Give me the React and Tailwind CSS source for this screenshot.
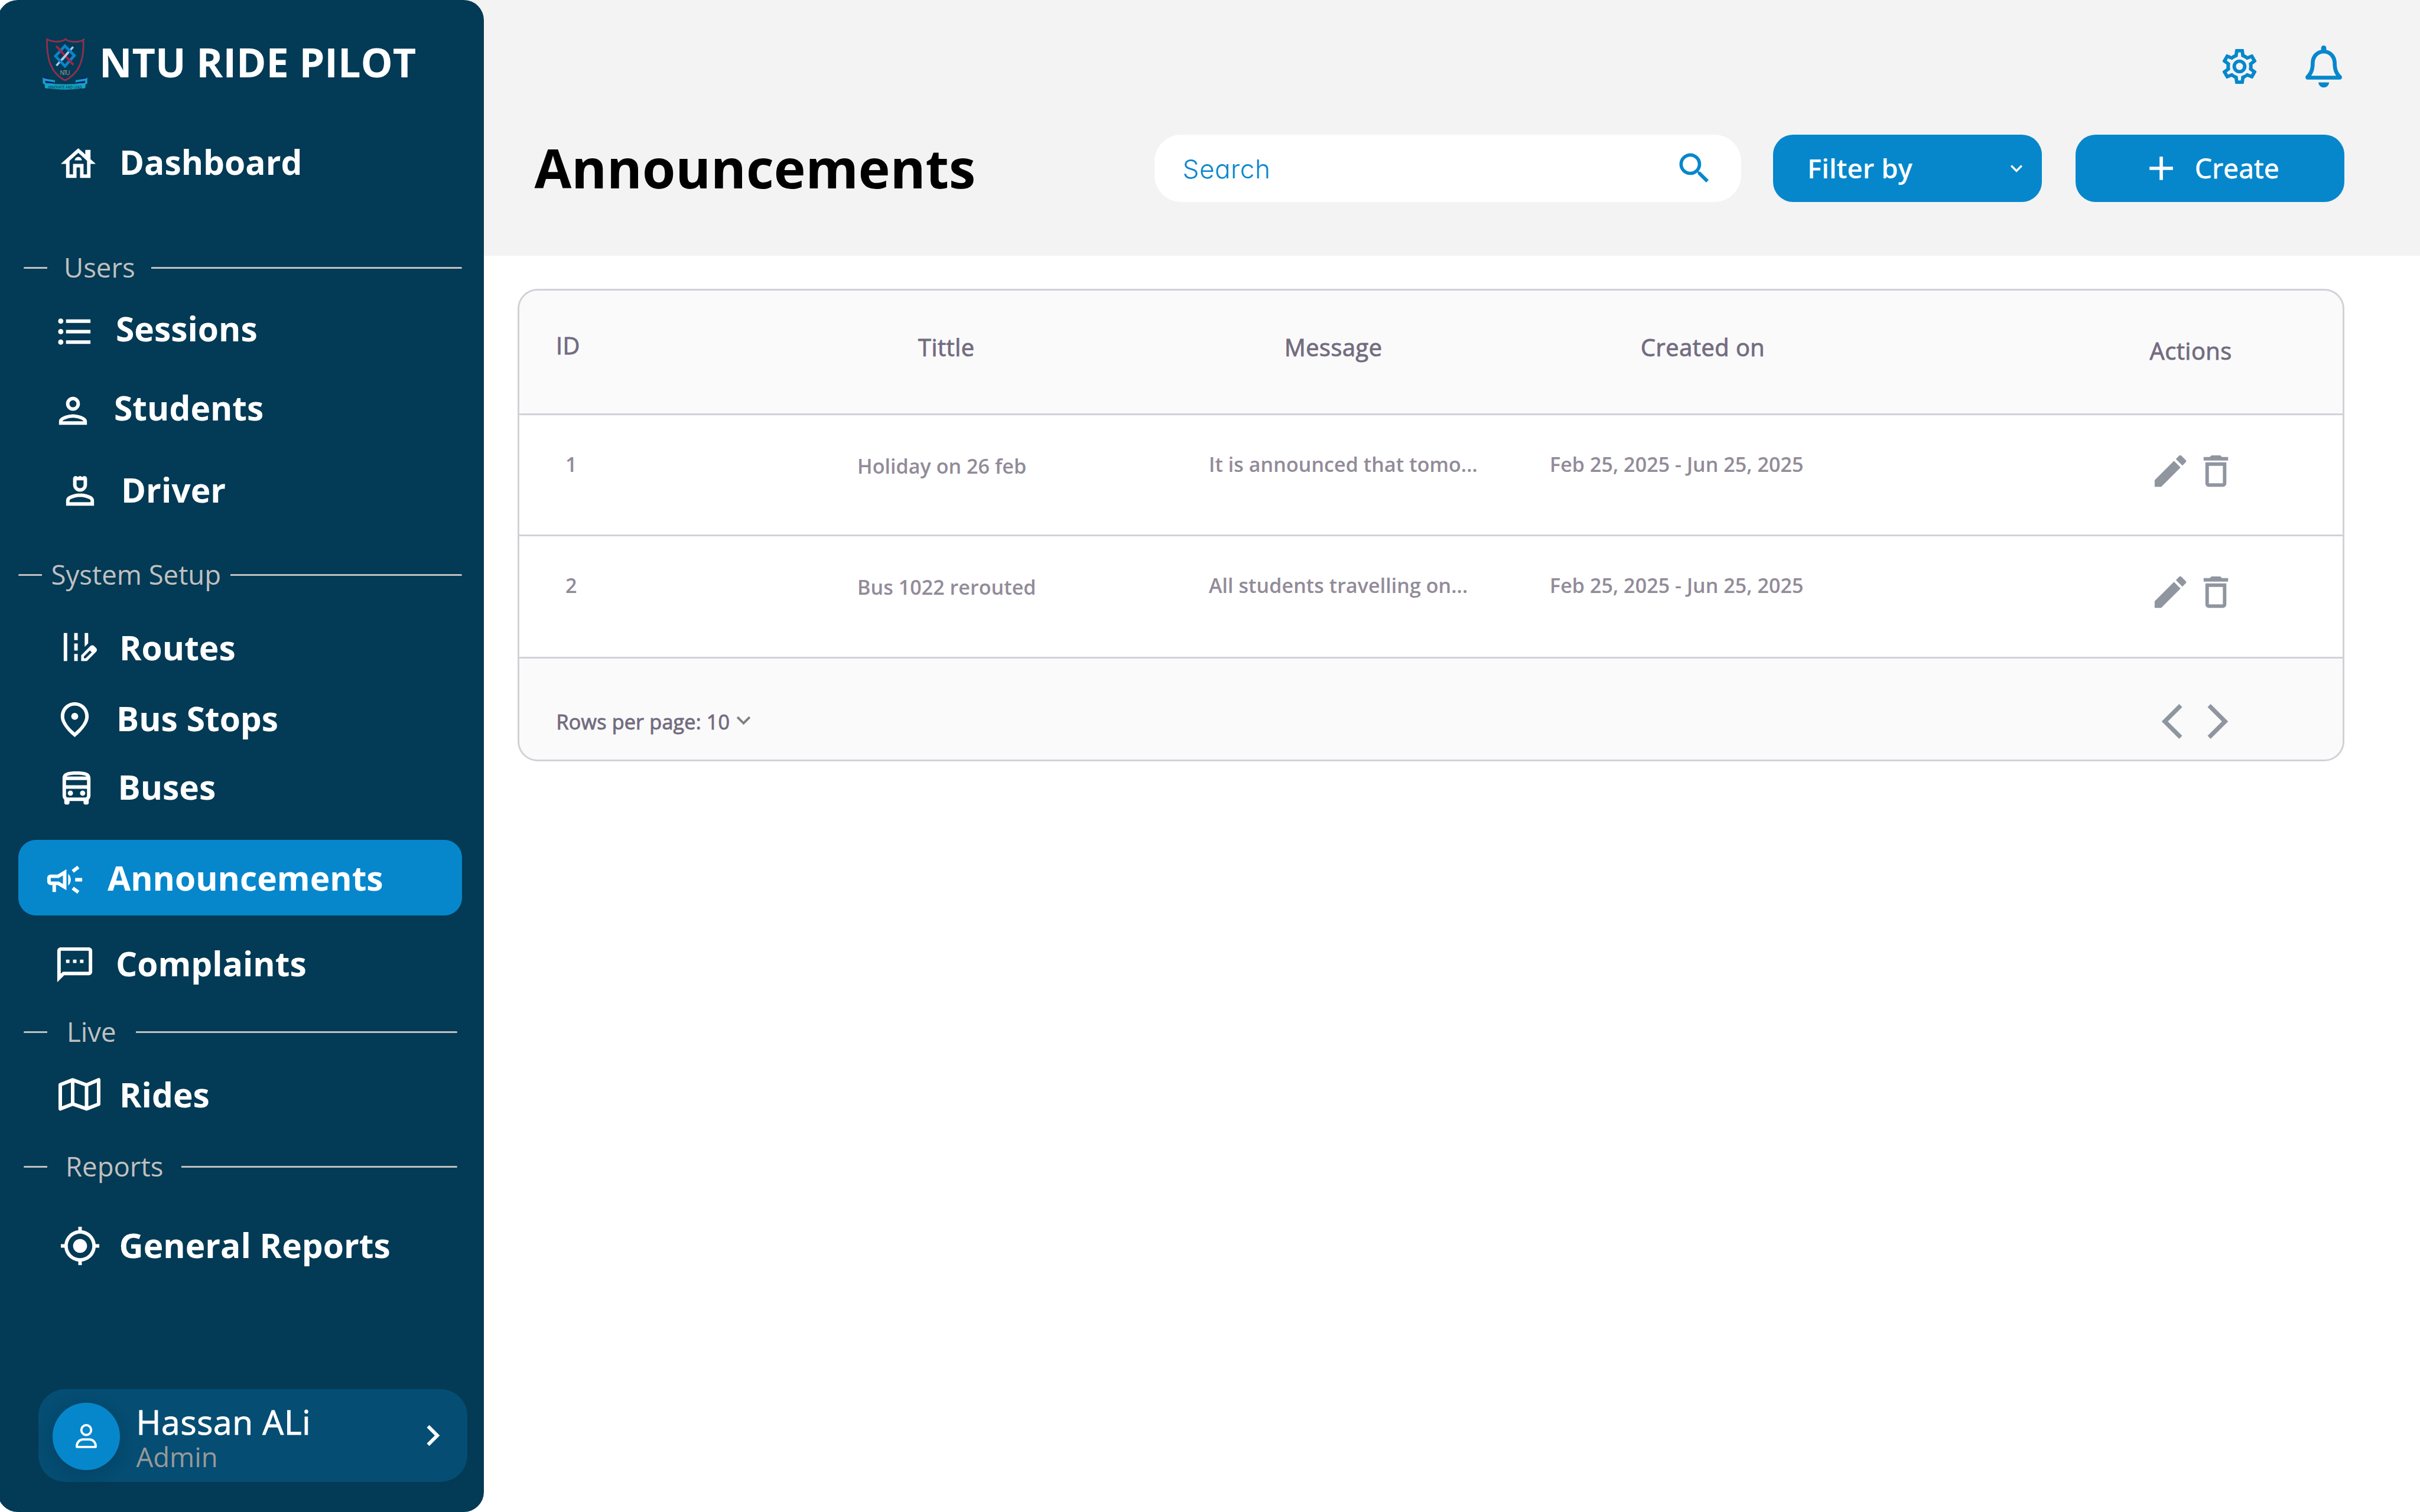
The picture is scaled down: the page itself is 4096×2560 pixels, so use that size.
import React from "react";
import {
  MdOutlineHouse,
  MdFormatListBulleted,
  MdOutlinePerson,
  MdOutlinePerson4,
  MdOutlineEditRoad,
  MdOutlineDirectionsBus,
  MdOutlineCampaign,
  MdOutlineSms,
  MdMyLocation,
  MdSearch,
  MdOutlineSettings,
  MdKeyboardArrowDown,
  MdAdd,
  MdEdit,
  MdDeleteOutline,
  MdArrowBackIosNew,
  MdArrowForwardIos,
  MdChevronRight,
} from "react-icons/md";

const MEDIUM = "[-webkit-text-stroke:0.9px] tracking-[0.012em]";

function Crest() {
  return (
    <svg viewBox="62 65 321 368" className="mt-[65px] ml-[71.5px] h-[87px] w-[76px] shrink-0 overflow-visible">
      <path
        d="M94 71C120 88 190 98 226 71C262 98 330 92 354 76C358 190 342 305 223 366C108 305 92 190 94 71Z"
        fill="none"
        stroke="#c9c3cf"
        strokeOpacity="0.55"
        strokeWidth="12"
        strokeDasharray="4 5"
      />
      <path
        d="M94 71C120 88 190 98 226 71C262 98 330 92 354 76C358 190 342 305 223 366C108 305 92 190 94 71Z"
        fill="none"
        stroke="#ae2140"
        strokeWidth="9"
      />
      <path d="M161 260L281 126" stroke="#a9cbee" strokeWidth="15" />
      <path d="M222 119L289 188L222 264L155 192Z" fill="none" stroke="#0b84cb" strokeWidth="20" />
      <path d="M160 120L283 254" stroke="#ae2140" strokeWidth="16" />
      <path d="M202 217L244 168" stroke="#a9cbee" strokeWidth="16" />
      <text x="187" y="326" textLength="71" fontSize="42" fill="#a9a188" className="font-['Open_Sans',sans-serif]">
        NTU
      </text>
      <path d="M63 344L104 358L150 364V388L80 396L64 388Z" fill="#12a5c0" />
      <path d="M383 344L342 358L298 364V388L368 396L382 388Z" fill="#12a5c0" />
      <path d="M66 341H104V357L70 351Z" fill="#1b1b86" />
      <path d="M382 341H344V357L378 351Z" fill="#1b1b86" />
      <path d="M80 368L148 379V389L84 386Z" fill="#1b1b86" />
      <path d="M368 368L300 379V389L364 386Z" fill="#1b1b86" />
      <path d="M76 384Q224 404 371 384L368 421Q224 442 79 421Z" fill="#12a5c0" />
      <text
        x="102"
        y="424"
        textLength="241"
        lengthAdjust="spacingAndGlyphs"
        fontSize="31"
        fill="#0b3f5c"
        className="font-['Open_Sans',sans-serif] font-semibold"
      >
        INNOVATE AND LEAD
      </text>
    </svg>
  );
}

function PinIcon({ className }) {
  return (
    <svg viewBox="0 0 24 24" fill="currentColor" fillRule="evenodd" className={className}>
      <path d="M12 2C7.8 2 4 5.22 4 10.2C4 13.52 6.67 17.45 12 22C17.33 17.45 20 13.52 20 10.2C20 5.22 16.2 2 12 2ZM18 10.2C18 12.77 15.9 15.99 12 19.34C8.1 15.99 6 12.77 6 10.2C6 6.57 8.65 4 12 4C15.35 4 18 6.57 18 10.2Z" />
      <circle cx="12" cy="10.1" r="2" />
    </svg>
  );
}

function MapIcon({ className }) {
  return (
    <svg viewBox="0 0 72 56" fill="none" stroke="currentColor" strokeWidth="6" strokeLinejoin="round" className={className}>
      <path d="M3 11.5L24 3.4L47.5 12L68 3.2V44.5L47.5 52.4L24 44.2L3 52.5ZM24 3.4V44.2M47.5 12V52.4" />
    </svg>
  );
}

function BellIcon() {
  return (
    <svg viewBox="0 0 62 71" fill="#0687cc" fillRule="evenodd" className="h-[71px] w-[62px]">
      <path d="M31 0C33.6 0 35.4 2 35.4 4.6V7.4C46 9.6 52.8 18 52.9 29.5C53 40 55 45 61.2 51.6C63 54.4 61.2 57.7 58.4 57.7H3.6C.8 57.7-1 54.4.8 51.6C7 45 9 40 9.1 29.5C9.2 18 16 9.6 26.6 7.4V4.6C26.6 2 28.4 0 31 0ZM31 13.4C22 13.4 15.8 20.4 15.7 30C15.6 39.5 13.8 45.6 9.9 51.2H52.1C48.2 45.6 46.4 39.5 46.3 30C46.2 20.4 40 13.4 31 13.4Z" />
      <path d="M22 62.4H40.2C39.8 67.6 36 71 31.1 71C26.2 71 22.4 67.6 22 62.4Z" />
    </svg>
  );
}

function UserIcon() {
  return (
    <svg viewBox="0 0 36 41" fill="none" stroke="#ffffff" strokeWidth="3.8" strokeLinejoin="round" className="h-[41px] w-[36px]">
      <circle cx="18" cy="10.2" r="8.3" />
      <path d="M2 38.8V37.4C2 31 7 26.2 12.6 26.2H23.4C29 26.2 34 31 34 37.4V38.8Z" />
    </svg>
  );
}

function NavItem({ icon: Icon, label, row, iconClass = "size-[71px]", labelClass }) {
  return (
    <a className={`flex h-[71px] shrink-0 items-start text-white ${row}`}>
      <Icon className={`shrink-0 ${iconClass}`} />
      <span className={`text-[56.89px] leading-[72px] font-bold whitespace-nowrap ${labelClass}`}>{label}</span>
    </a>
  );
}

function Section({ label, row, labelClass }) {
  return (
    <div className={`flex h-[63px] shrink-0 items-start text-[#c0c0c0] ${row}`}>
      <span className="mt-[32px] h-[3px] w-[40px] shrink-0 rounded-l-full bg-[#c0c0c0]" />
      <span className={`mt-px shrink-0 text-[45.51px] leading-[63px] whitespace-nowrap ${labelClass}`}>{label}</span>
      <span className="mt-[32px] h-[3px] flex-1 rounded-r-full bg-[#c0c0c0]" />
    </div>
  );
}

function Sidebar() {
  return (
    <aside className="relative z-10 -ml-[4px] flex h-[2560px] w-[823px] shrink-0 flex-col rounded-[34px] bg-[#033a55] pl-[4px]">
      <div className="flex h-[242px] shrink-0 items-start">
        <Crest />
        <span className="mt-[65px] ml-[20.5px] text-[68.27px] leading-[80px] font-bold whitespace-nowrap text-white">
          NTU RIDE PILOT
        </span>
      </div>
      <NavItem icon={MdOutlineHouse} label="Dashboard" row="ml-[96.5px]" labelClass="ml-[34.5px] -mt-[4px]" />
      <Section label="Users" row="mt-[107px] ml-[40px] mr-[37px]" labelClass="ml-[28px] w-[148px]" />
      <NavItem icon={MdFormatListBulleted} label="Sessions" row="mt-[43px] ml-[91px]" labelClass="ml-[34px] -mt-[6px]" />
      <NavItem icon={MdOutlinePerson} label="Students" row="mt-[63px] ml-[87.5px]" labelClass="ml-[34.5px] -mt-[6px]" />
      <NavItem icon={MdOutlinePerson4} label="Driver" row="mt-[66px] ml-[99.5px]" labelClass="ml-[34.5px] -mt-[4px]" />
      <Section label="System Setup" row="mt-[72px] ml-[31px] mr-[37px]" labelClass="ml-[15.5px] w-[303.5px]" />
      <NavItem icon={MdOutlineEditRoad} label="Routes" row="mt-[57px] ml-[96px]" labelClass="ml-[35px]" />
      <NavItem icon={PinIcon} label="Bus Stops" row="mt-[52px] ml-[91px]" labelClass="ml-[35px] -mt-[3.5px]" />
      <NavItem icon={MdOutlineDirectionsBus} label="Buses" row="mt-[46px] ml-[93.5px]" labelClass="ml-[35px] -mt-[4px]" />
      <div className="mt-[51px] mr-[37px] ml-[31px] h-[128px] shrink-0 rounded-[30px] bg-[#0687cc] pt-[31.5px]">
        <NavItem icon={MdOutlineCampaign} label="Announcements" row="ml-[42.5px]" labelClass="ml-[37.5px] -mt-[4px]" />
      </div>
      <NavItem icon={MdOutlineSms} label="Complaints" row="mt-[48px] ml-[91px]" labelClass="ml-[34px] -mt-[3.5px]" />
      <Section label="Live" row="mt-[45px] ml-[40px] mr-[45px]" labelClass="ml-[33px] w-[117px]" />
      <NavItem
        icon={MapIcon}
        label="Rides"
        row="mt-[48px] ml-[99px]"
        iconClass="h-[56px] w-[72px]"
        labelClass="ml-[31px] -mt-[8px]"
      />
      <Section label="Reports" row="mt-[46px] ml-[40px] mr-[45px]" labelClass="ml-[31px] w-[196px]" />
      <NavItem icon={MdMyLocation} label="General Reports" row="mt-[69px] ml-[99.5px]" labelClass="ml-[31px] -mt-[2px]" />
      <div className="mt-[207px] ml-[65px] flex h-[156.5px] w-[726px] shrink-0 items-start rounded-[45px] bg-[#054d73]">
        <div className="mt-[22.5px] ml-[23.5px] flex size-[114px] shrink-0 items-center justify-center rounded-full bg-[#0687cc] shadow-[0_6px_30px_rgba(0,0,0,0.14)]">
          <UserIcon />
        </div>
        <div className="mt-[24px] ml-[28px] flex flex-col">
          <span className={`text-[56.89px] leading-[63px] whitespace-nowrap text-white ${MEDIUM}`}>Hassan ALi</span>
          <span className="text-[45.51px] leading-[54px] text-[#999999]">Admin</span>
        </div>
        <MdChevronRight className="mt-[43px] mr-[23px] ml-auto size-[71px] text-white" />
      </div>
    </aside>
  );
}

function TopBar() {
  return (
    <header className="h-[432.5px] bg-[#f3f3f3] pr-[128px] pl-[125.5px]">
      <div className="flex h-[227.5px] items-start justify-end gap-[76px] pt-[77px] pr-[4px] text-[#0687cc]">
        <MdOutlineSettings className="size-[71px]" />
        <BellIcon />
      </div>
      <div className="flex h-[114px] items-center text-[45.51px]">
        <h1 className="-mt-[2px] flex-1 text-[91.02px] leading-[114px] font-bold text-black">Announcements</h1>
        <div className="flex h-[114px] w-[993px] items-center justify-between rounded-[45.5px] bg-white pr-[45.5px] pl-[47.5px] text-[#0687cc]">
          <span className="mt-[2px] font-['Inter',sans-serif] text-[44px] font-light tracking-[0.6px] [font-feature-settings:'cv11']">
            Search
          </span>
          <MdSearch className="size-[68px]" />
        </div>
        <button className="ml-[54px] flex h-[114px] w-[455px] items-center justify-between rounded-[34px] bg-[#0687cc] pr-[23px] pl-[58px] font-semibold text-white">
          <span className="-mt-[1px]">Filter by</span>
          <MdKeyboardArrowDown className="size-[40px]" />
        </button>
        <button className="ml-[57px] flex h-[114px] w-[455px] items-center gap-[23px] rounded-[34px] bg-[#0687cc] pl-[111px] text-white">
          <MdAdd className="size-[68px]" />
          <span className={`-mt-[1px] ${MEDIUM}`}>Create</span>
        </button>
      </div>
    </header>
  );
}

const ROWS = [
  { id: "1", title: "Holiday on 26 feb", message: "It is announced that tomo...", date: "Feb 25, 2025 - Jun 25, 2025", height: "h-[205px]" },
  { id: "2", title: "Bus 1022 rerouted", message: "All students travelling on...", date: "Feb 25, 2025 - Jun 25, 2025", height: "h-[207px]" },
];

function AnnouncementTable() {
  return (
    <section className="mt-[56.5px] ml-[97px] w-[3092px] overflow-hidden rounded-[34px] border-[3px] border-[#d2d1d7] bg-[#fafafb]">
      <div
        className={`grid h-[211px] grid-cols-[613px_620px_603px_861.5px_1fr] items-start border-b-[3px] border-[#d2d1d7] pl-[62px] text-[39.82px] leading-[56px] text-[#736c7f] ${MEDIUM}`}
      >
        <span className="mt-[65px]">ID</span>
        <span className="mt-[68px]">Tittle</span>
        <span className="mt-[68px]">Message</span>
        <span className="mt-[68px]">Created on</span>
        <span className="mt-[74px]">Actions</span>
      </div>
      {ROWS.map((r) => (
        <div
          key={r.id}
          className={`grid grid-cols-[494px_595px_577px_1015px_1fr] items-start border-b-[3px] border-[#d2d1d7] bg-white pt-[59px] pl-[78px] text-[34.13px] leading-[48px] font-semibold whitespace-nowrap text-[#928b99] ${r.height}`}
        >
          <span>{r.id}</span>
          <span className="mt-[2.5px]">{r.title}</span>
          <span>{r.message}</span>
          <span>{r.date}</span>
          <span className="flex gap-[6px] text-[#9096a0]">
            <MdEdit className="size-[71px]" />
            <MdDeleteOutline className="size-[71px]" />
          </span>
        </div>
      ))}
      <div className="flex h-[171px] items-start pl-[62.5px]">
        <span className="mt-[82.5px] w-[293px] text-[34.13px] leading-[48px] tracking-[0.2px] whitespace-nowrap text-[#736c7f] [-webkit-text-stroke:0.9px]">
          Rows per page: 10
        </span>
        <MdKeyboardArrowDown className="mt-[80.5px] size-[47px] text-[#808080]" />
        <span className="mt-[71px] mr-[176px] ml-auto flex gap-[6px] text-[#9096a0]">
          <MdArrowBackIosNew className="size-[71px]" />
          <MdArrowForwardIos className="size-[71px]" />
        </span>
      </div>
    </section>
  );
}

export default function App() {
  return (
    <div className="flex h-[2560px] w-[4096px] overflow-hidden bg-white font-['Open_Sans',sans-serif]">
      <Sidebar />
      <main className="-ml-[40px] flex-1">
        <TopBar />
        <AnnouncementTable />
      </main>
    </div>
  );
}
